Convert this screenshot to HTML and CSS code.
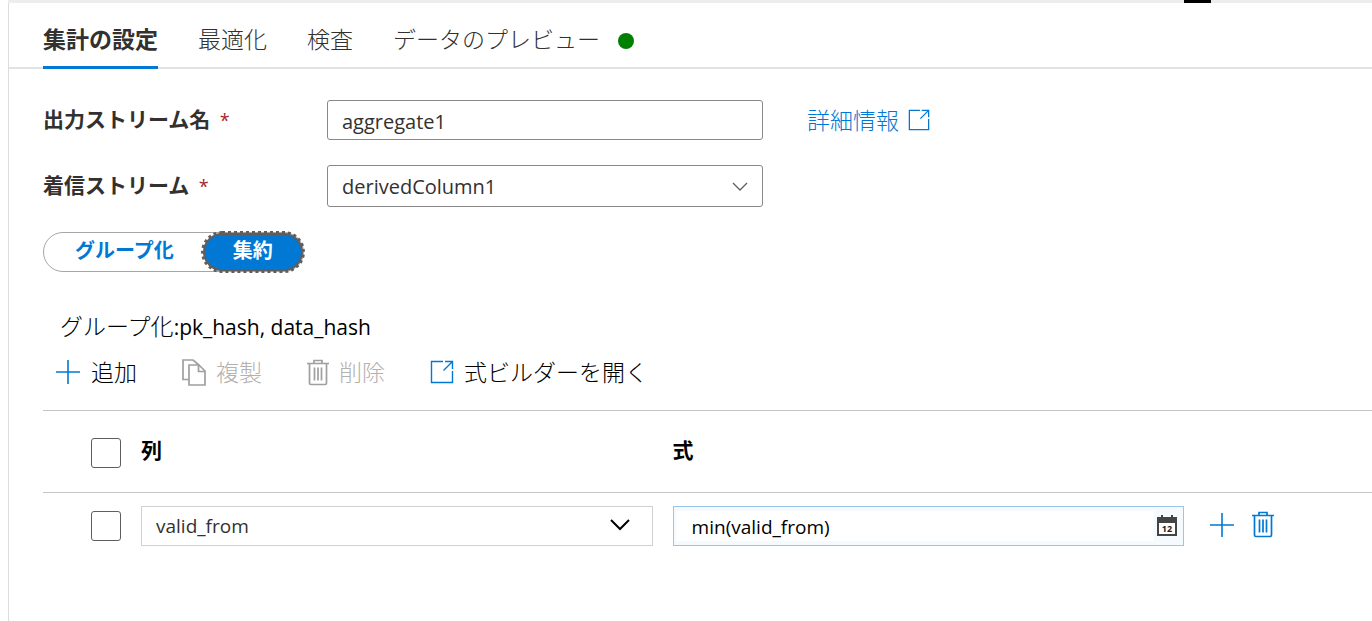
FILE: index.html
```html
<!DOCTYPE html>
<html lang="ja">
<head>
<meta charset="utf-8">
<meta name="viewport" content="width=device-width, initial-scale=1">
<title>集計の設定</title>
<link rel="stylesheet" href="styles.css">
</head>
<body>
<svg class="defs" width="0" height="0" aria-hidden="true">
  <symbol id="plus" viewBox="0 0 26 26"><path d="M13 1v24M1 13h24" fill="none" stroke="currentColor" stroke-width="1.600"/></symbol>
  <symbol id="open" viewBox="0 0 24 24"><path d="M13 1.500H1.500v21h21V11M13.500 10.500L22.500 1.500M15 1.500h7.500V9" fill="none" stroke="currentColor" stroke-width="1.400"/></symbol>
  <symbol id="trash" viewBox="0 0 22 27"><path d="M0 4.500h22M7 4V1.500h8V4M2.500 5v19c0 1 .5 1.500 1.500 1.500h14c1 0 1.500-.5 1.500-1.500V5M7.500 8.500v13M11 8.500v13M14.500 8.500v13" fill="none" stroke="currentColor" stroke-width="1.700"/></symbol>
  <symbol id="copy" viewBox="0 0 24 27"><path d="M6.500 20.500H1V1h10l6 5M7 6h10l6 6v14H7zM16.500 6v6.500H23" fill="none" stroke="currentColor" stroke-width="1.700"/></symbol>
</svg>
<div class="topbar"><span class="handle"></span></div>
<main class="panel">
  <nav class="tabs">
    <a class="tab active" href="#settings">集計の設定</a>
    <a class="tab" href="#optimize">最適化</a>
    <a class="tab" href="#inspect">検査</a>
    <a class="tab" href="#preview">データのプレビュー<span class="dot"></span></a>
  </nav>
  <div class="content">
    <form class="fields">
      <label for="output">出力ストリーム名 <span class="required">*</span></label>
      <input class="control output" id="output" type="text" value="aggregate1">
      <a class="more" href="#help">詳細情報<svg class="icon-link"><use href="#open"/></svg></a>
      <label for="incoming">着信ストリーム <span class="required">*</span></label>
      <div class="picker">
        <select class="control incoming" id="incoming"><option>derivedColumn1</option></select>
        <svg class="chevron thin" viewBox="0 0 16 10"><path d="M1 1l7 7 7-7"/></svg>
      </div>
    </form>
    <div class="switch">
      <button class="choice" type="button">グループ化</button>
      <button class="choice selected" type="button">集約</button>
    </div>
    <p class="summary">グループ化<span class="latin">:pk_hash, data_hash</span></p>
    <div class="toolbar">
      <button type="button"><svg class="icon-plus"><use href="#plus"/></svg>追加</button>
      <button type="button" disabled><svg class="icon-copy"><use href="#copy"/></svg>複製</button>
      <button type="button" disabled><svg class="icon-trash"><use href="#trash"/></svg>削除</button>
      <button type="button"><svg class="icon-open"><use href="#open"/></svg>式ビルダーを開く</button>
    </div>
    <table class="columns">
      <thead>
        <tr>
          <th class="check"><input type="checkbox" aria-label="すべて選択"></th>
          <th class="half">列</th>
          <th class="half">式</th>
          <th></th>
        </tr>
      </thead>
      <tbody>
        <tr>
          <td class="check"><input type="checkbox" aria-label="行を選択"></td>
          <td class="half">
            <div class="picker">
              <select class="column" aria-label="列"><option>valid_from</option></select>
              <svg class="chevron bold" viewBox="0 0 20 12"><path d="M1 1l9 9 9-9"/></svg>
            </div>
          </td>
          <td class="half">
            <div class="expression">
              <input type="text" aria-label="式" value="min(valid_from)">
              <svg class="calendar" viewBox="0 0 20 21"><path d="M1 3h18v17H1z" fill="#fff" stroke="#444" stroke-width="2"/><path d="M0 2h3v2h3V2h8v2h3V2h3v6H0zM4 0h2v2H4zM14 0h2v2h-2z" fill="#444"/><text x="10" y="17">12</text></svg>
            </div>
          </td>
          <td>
            <div class="actions">
              <button type="button" aria-label="追加"><svg class="icon-plus"><use href="#plus"/></svg></button>
              <button type="button" aria-label="削除"><svg class="icon-trash"><use href="#trash"/></svg></button>
            </div>
          </td>
        </tr>
      </tbody>
    </table>
  </div>
</main>
</body>
</html>
```
FILE: styles.css
```css
* { box-sizing: border-box; }

body {
  display: flex;
  flex-direction: column;
  min-height: 100vh;
  margin: 0;
  padding-left: 8px;
  background: #fff;
  color: #000;
  font-family: "Open Sans", "Noto Sans CJK JP", sans-serif;
  font-size: 23px;
  font-weight: 300;
  line-height: 32px;
}

button, input, select { font: inherit; color: inherit; }
button { padding: 0; border: 0; background: none; cursor: pointer; }
a { color: inherit; text-decoration: none; }
svg { flex: none; }

.defs { position: absolute; }

.topbar {
  display: flex;
  justify-content: flex-end;
  height: 3px;
  padding-right: 161px;
  background: #ededed;
}
.handle { width: 27px; background: #000; }

.panel {
  flex: 1;
  border-left: 1px solid #dcdcdc;
}

.tabs {
  display: flex;
  gap: 40px;
  padding-left: 34px;
  border-bottom: 2px solid #e2e2e2;
  color: #323130;
}
.tab {
  display: flex;
  align-items: center;
  gap: 18px;
  height: 66px;
  margin-bottom: -2px;
  padding-top: 9px;
  border-bottom: 3px solid transparent;
}
.tab.active { border-color: #0078d4; font-weight: 700; }
.dot { width: 16px; height: 16px; margin-top: 4px; border-radius: 50%; background: #008000; }

.content { padding-left: 34px; }

.fields {
  display: grid;
  grid-template-columns: 284px 436px auto;
  row-gap: 25px;
  align-items: center;
  padding-top: 31px;
  color: #323130;
}
.fields label { padding-bottom: 2px; font-size: 21px; font-weight: 700; }
.required { margin-left: 4px; color: #a4262c; font-size: 18px; font-weight: 400; }
.control {
  width: 100%;
  height: 42px;
  padding: 2px 14px 0;
  border: 1px solid #8a8886;
  border-radius: 3px;
  background: #fff;
  font-size: 20px;
  font-weight: 400;
}
.output { height: 40px; }
.more {
  display: flex;
  align-items: center;
  gap: 9px;
  padding-left: 44px;
  color: #0078d4;
}
.icon-link { width: 22px; height: 22px; }

.picker { display: grid; align-items: center; }
.picker select, .picker svg { grid-area: 1 / 1; }
.picker select { appearance: none; }
.chevron {
  justify-self: end;
  fill: none;
  pointer-events: none;
}
.thin { width: 16px; height: 10px; margin: 2px 15px 0 0; stroke: #605e5c; stroke-width: 1.3; }
.bold { width: 20px; height: 12px; margin: 0 23px 2px 0; stroke: #000; stroke-width: 2; }

.switch {
  display: flex;
  width: max-content;
  height: 40px;
  margin-top: 25px;
  border: 1px solid #a6a6a6;
  border-radius: 20px;
}
.choice {
  padding: 0 29px 3px 31px;
  color: #0078d4;
  font-size: 20px;
  font-weight: 700;
}
.choice.selected {
  padding: 0 28px 4px;
  border: 2px solid #605e5c;
  border-radius: 20px;
  outline: 3px dotted #605e5c;
  outline-offset: -1px;
  background: #0078d4;
  color: #fff;
}

.summary { margin: 38px 0 0 17px; }
.latin { font-size: 21px; font-weight: 400; }

.toolbar {
  display: flex;
  gap: 45px;
  padding: 13px 0 22px 12px;
}
.toolbar button {
  display: flex;
  align-items: center;
  gap: 10px;
}
.toolbar button:disabled { color: #b3b0ad; cursor: default; }
.toolbar svg { color: #0078d4; }
.toolbar button:disabled svg { color: #a19f9d; }
.icon-plus { width: 26px; height: 26px; }
.icon-copy { width: 24px; height: 27px; }
.icon-trash { width: 22px; height: 27px; }
.icon-open { width: 24px; height: 24px; }

.columns {
  width: 100%;
  border-collapse: collapse;
  table-layout: fixed;
}
.columns tr { border-top: 1px solid #c8c6c4; }
.columns th, .columns td { padding: 0; text-align: left; }
.columns th { height: 82px; padding-bottom: 4px; font-size: 21px; font-weight: 700; }
.columns td { height: 66px; }
.columns .check { width: 98px; padding-left: 48px; }
.columns th.check { padding-top: 3px; padding-bottom: 0; }
.columns .half { width: 40%; padding-right: 20px; }
.check input {
  appearance: none;
  display: block;
  width: 30px;
  height: 30px;
  margin: 0;
  border: 1px solid #605e5c;
  border-radius: 3px;
}

.column {
  width: 100%;
  height: 40px;
  padding: 0 14px;
  border: 1px solid #d2d0ce;
  border-radius: 0;
  background: #fff;
  color: #323130;
  font-size: 19px;
  font-weight: 400;
}
.expression {
  display: flex;
  align-items: center;
  height: 40px;
  padding: 4px 6px 4px 2px;
  border: 1px solid #9cc5e5;
  background: #f5faff;
}
.expression input {
  flex: 1;
  min-width: 0;
  height: 30px;
  margin-right: 3px;
  padding: 2px 0 0 16px;
  border: 0;
  background: #fff;
  font-size: 19px;
  font-weight: 400;
}
.calendar { width: 20px; height: 21px; }
.calendar text {
  fill: #222;
  font-size: 9px;
  font-weight: 700;
  text-anchor: middle;
}

.actions {
  display: flex;
  align-items: center;
  gap: 17px;
  padding: 0 0 2px 5px;
}
.actions button { display: flex; color: #0078d4; }
```
